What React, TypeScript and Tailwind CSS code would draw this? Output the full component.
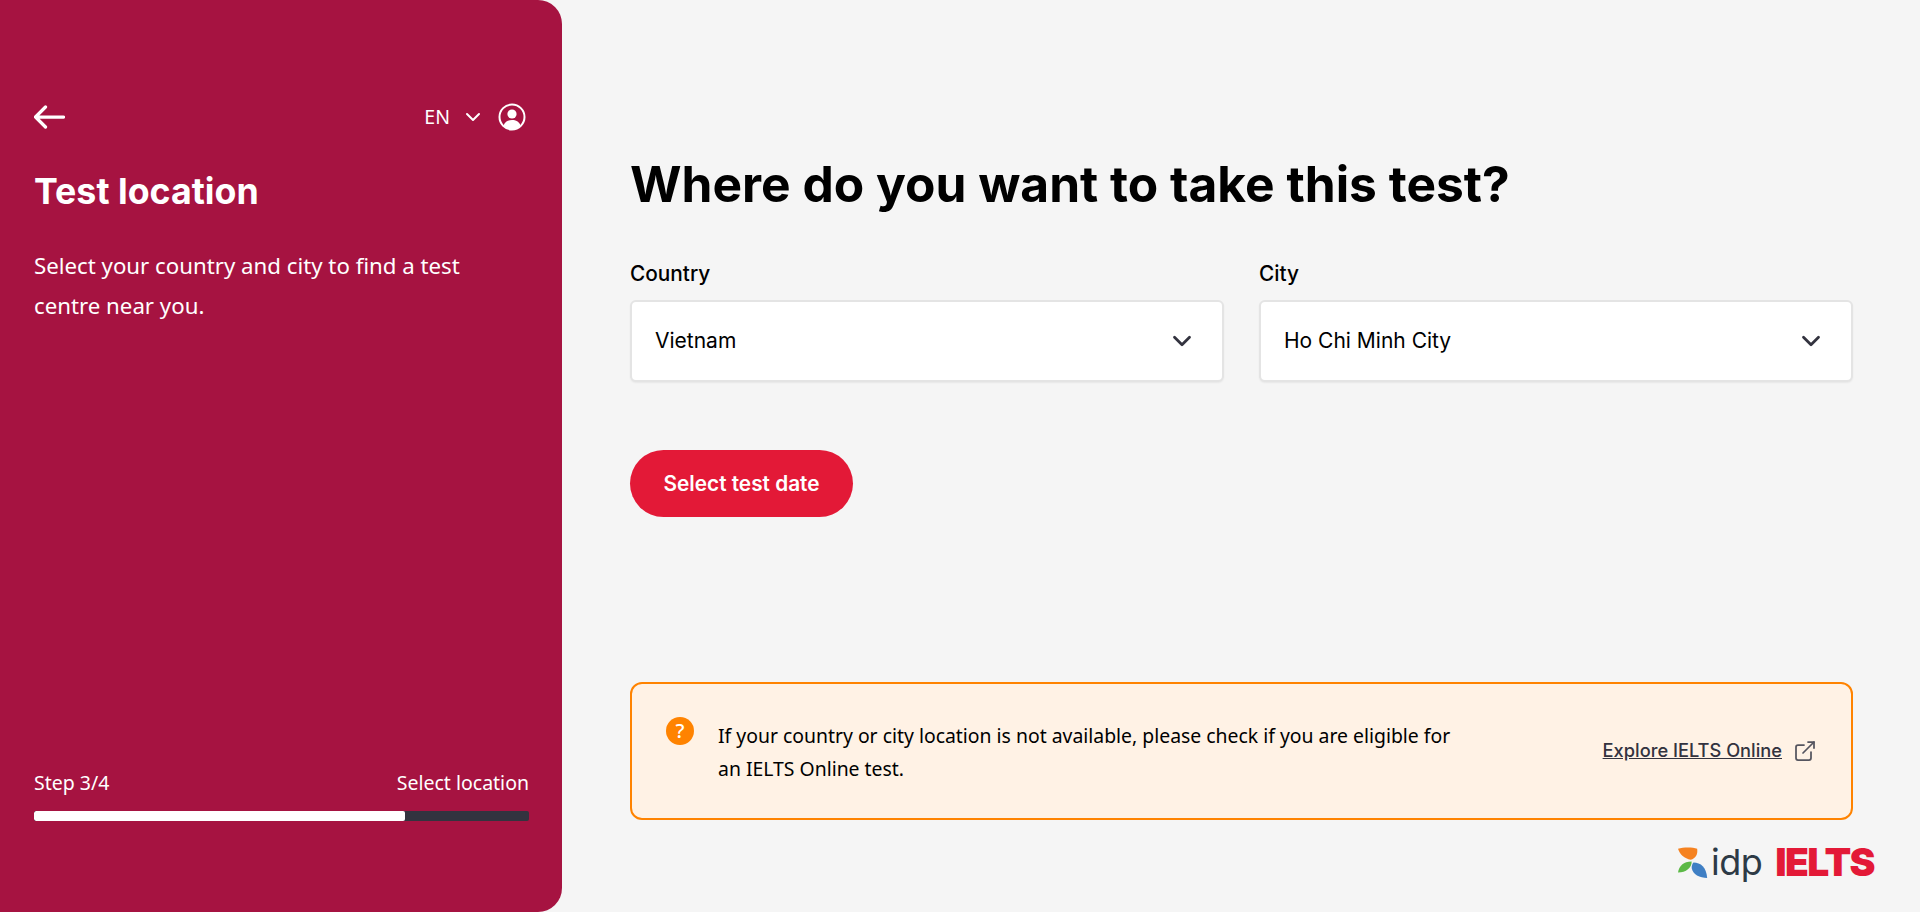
import React from 'react';
import { ChevronDown, ExternalLink } from 'lucide-react';

const NOTO = "font-['Noto_Sans',sans-serif]";
const HEAD = "font-['Inter',sans-serif]";

const SelectBox = ({ label, value }: { label: string; value: string }) => (
  <div className="flex-1">
    <label className={`block mb-[13px] text-[20.8px] leading-[26px] font-medium text-black ${HEAD}`}>{label}</label>
    <div className="flex items-center justify-between h-[82px] pl-[23px] pr-[25px] bg-white rounded-[6px] border-2 border-[#e4e4e4] shadow-[0_1px_2px_rgba(0,0,0,0.06)]">
      <span className={`text-[21px] text-black ${HEAD}`}>{value}</span>
      <ChevronDown className="w-[30px] h-[30px] text-[#33333f]" strokeWidth={2.25} />
    </div>
  </div>
);

const IdpLogo = () => (
  <div className="flex items-start">
    <svg width="31" height="31" viewBox="0 0 34 34" className="mt-[3px]">
      <path d="M0 2 C6 0 16 0 21 2 C22 8 19 13 14 14 C7 13 2 8 0 2Z" fill="#f58220" />
      <path d="M0 28 C1 21 6 16 15 16 C15 23 9 28 0 28Z" fill="#5cb947" />
      <path d="M17 17 C25 17 31 22 32 34 C24 34 16 30 15 23 C15 20 16 18 17 17Z" fill="#3f7fc4" />
    </svg>
    <span className={`ml-[2px] text-[36px] leading-[36px] text-[#2d3a46] tracking-[-0.5px] ${HEAD}`}>idp</span>
    <span className={`ml-[13px] text-[39px] leading-[36px] font-black text-[#e31937] tracking-[-1.6px] ${HEAD}`}>IELTS</span>
  </div>
);

export default function App() {
  return (
    <div className="flex h-[912px] w-full bg-[#f5f5f5] overflow-hidden">
      {/* Sidebar */}
      <aside className="flex flex-col justify-between w-[562px] h-full shrink-0 bg-[#a61341] rounded-r-[24px] pl-[34px] pr-[33px] pt-[102px] pb-[91px] text-white">
        <div>
          <div className="flex items-center justify-between h-[28px] pr-[2px] translate-y-[1px]">
            <svg width="31" height="24" viewBox="0 0 31 24" fill="none" stroke="white" strokeWidth="3.25" strokeLinecap="round" strokeLinejoin="round">
              <path d="M1.5 12H29.5M11.5 2 1.5 12l10 10" />
            </svg>
            <div className="flex items-center">
              <span className={`text-[19.5px] ${NOTO}`}>EN</span>
              <ChevronDown className="w-[24px] h-[24px] ml-[11px] mr-[13px]" strokeWidth={2} />
              <svg width="28" height="28" viewBox="0 0 28 28" className="mr-[1px]">
                <circle cx="14" cy="14" r="12.5" fill="none" stroke="white" strokeWidth="2" />
                <circle cx="14" cy="11" r="4.6" fill="white" />
                <path d="M5.5 22.5C7 18.5 10 17 14 17s7 1.5 8.5 5.5C20 25 17 26.5 14 26.5S8 25 5.5 22.5Z" fill="white" />
              </svg>
            </div>
          </div>
          <h2 className={`mt-[38px] text-[35.75px] leading-[46px] font-bold ${HEAD}`}>Test location</h2>
          <p className={`mt-[32px] text-[22.25px] leading-[40px] ${NOTO}`}>
            Select your country and city to find a test<br />centre near you.
          </p>
        </div>
        <div>
          <div className={`flex justify-between text-[19.5px] leading-[26px] ${NOTO}`}>
            <span>Step 3/4</span>
            <span>Select location</span>
          </div>
          <div className="mt-[15px] h-[10px] rounded-[2px] bg-[#33333f] overflow-hidden">
            <div className="h-full w-3/4 bg-white rounded-[2px]" />
          </div>
        </div>
      </aside>

      {/* Main */}
      <main className="flex flex-col flex-1 pl-[68px] pr-[67px] pt-[148px] pb-[32px]">
        <h1 className={`text-[49.7px] leading-[72px] font-bold text-black ${HEAD}`}>Where do you want to take this test?</h1>
        <div className="flex gap-[35px] mt-[41px]">
          <SelectBox label="Country" value="Vietnam" />
          <SelectBox label="City" value="Ho Chi Minh City" />
        </div>
        <button className={`self-start mt-[68px] h-[67px] w-[223px] rounded-full bg-[#e31937] text-white text-[20.8px] font-semibold ${HEAD}`}>
          Select test date
        </button>

        <div className="mt-auto">
          <div className="flex items-center justify-between h-[138px] rounded-[12px] border-2 border-[#ff8300] bg-[#fff2e5] pl-[34px] pr-[34px]">
            <div className="flex items-start">
              <div className={`flex items-center justify-center w-[28px] h-[28px] shrink-0 rounded-full bg-[#ff8300] text-white text-[20px] font-medium ${NOTO}`}>?</div>
              <p className={`mt-[2px] ml-[24px] text-[19.4px] leading-[33px] text-black ${NOTO}`}>
                If your country or city location is not available, please check if you are eligible for<br />an IELTS Online test.
              </p>
            </div>
            <a className="flex items-center">
              <span className={`text-[18.25px] underline font-medium text-[#33333f] ${HEAD}`}>Explore IELTS Online</span>
              <ExternalLink className="w-[24px] h-[24px] ml-[11px] text-[#55555f]" strokeWidth={1.75} />
            </a>
          </div>
          <div className="flex justify-end mt-[24px] mr-[-21px]">
            <IdpLogo />
          </div>
        </div>
      </main>
    </div>
  );
}
